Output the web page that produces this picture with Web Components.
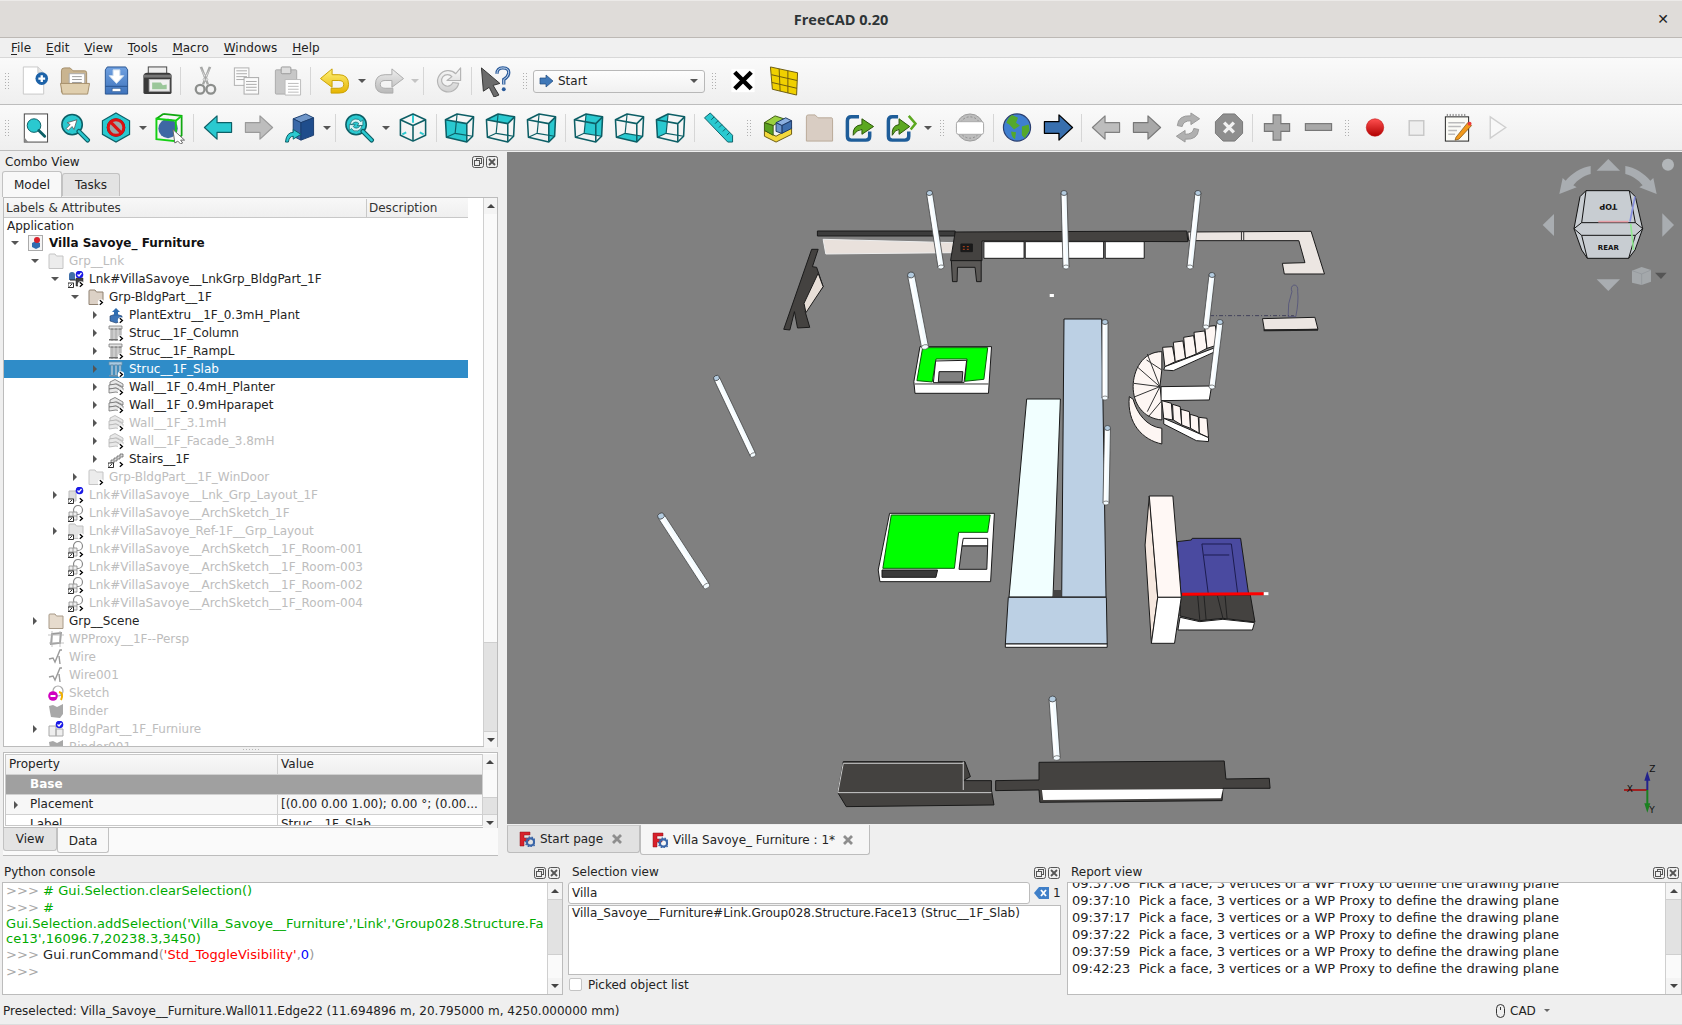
<!DOCTYPE html>
<html>
<head>
<meta charset="utf-8">
<title>FreeCAD 0.20</title>
<style>
  html, body { margin: 0; height: 100%; overflow: hidden; }
  body { background: #efefef; color: #232323; font: 12px "DejaVu Sans", sans-serif; width: 1682px; height: 1025px; display: flex; flex-direction: column; }
  #main { display: flex; height: 706px; }
  #center { width: 1175px; display: flex; flex-direction: column; }
  #bottom { display: flex; height: 138px; }
</style>
</head>
<body>
<fc-titlebar>FreeCAD 0.20</fc-titlebar>
<fc-menubar></fc-menubar>
<fc-toolbar h="46">
  <fc-grip w="13"></fc-grip>
  <fc-tool icon="new"></fc-tool><fc-tool icon="open"></fc-tool><fc-tool icon="save"></fc-tool><fc-tool icon="print"></fc-tool>
  <fc-sep w="7"></fc-sep>
  <fc-tool icon="cut"></fc-tool><fc-tool icon="copy"></fc-tool><fc-tool icon="paste"></fc-tool>
  <fc-sep w="7"></fc-sep>
  <fc-tool icon="undo"></fc-tool><fc-drop w="13"></fc-drop><fc-tool icon="redo"></fc-tool><fc-drop w="11" off></fc-drop>
  <fc-sep w="7"></fc-sep>
  <fc-tool icon="refresh"></fc-tool>
  <fc-sep w="7"></fc-sep>
  <fc-tool icon="whats"></fc-tool>
  <fc-grip w="17"></fc-grip>
  <fc-workbench>Start</fc-workbench>
  <fc-grip w="17"></fc-grip>
  <fc-tool icon="cross"></fc-tool><fc-tool icon="wallgrid"></fc-tool>
</fc-toolbar>
<fc-toolbar h="45">
  <fc-grip w="13"></fc-grip>
  <fc-tool icon="fitall"></fc-tool><fc-tool icon="fitsel"></fc-tool><fc-tool icon="nostyle"></fc-tool><fc-drop w="13"></fc-drop><fc-tool icon="bbox"></fc-tool>
  <fc-sep w="7"></fc-sep>
  <fc-tool icon="back"></fc-tool><fc-tool icon="fwd"></fc-tool><fc-tool icon="boxview"></fc-tool><fc-drop w="13"></fc-drop>
  <fc-sep w="5"></fc-sep>
  <fc-tool icon="sync"></fc-tool><fc-drop w="13"></fc-drop><fc-tool icon="iso"></fc-tool>
  <fc-sep w="6"></fc-sep>
  <fc-tool icon="vfront"></fc-tool><fc-tool icon="vtop"></fc-tool><fc-tool icon="vright"></fc-tool>
  <fc-sep w="6"></fc-sep>
  <fc-tool icon="vrear"></fc-tool><fc-tool icon="vbottom"></fc-tool><fc-tool icon="vleft"></fc-tool>
  <fc-sep w="7"></fc-sep>
  <fc-tool icon="ruler"></fc-tool>
  <fc-grip w="18"></fc-grip>
  <fc-tool icon="part"></fc-tool><fc-tool icon="folder"></fc-tool><fc-tool icon="linkto"></fc-tool><fc-tool icon="linkact"></fc-tool><fc-drop w="13"></fc-drop>
  <fc-grip w="15"></fc-grip>
  <fc-tool icon="coin"></fc-tool>
  <fc-sep w="6"></fc-sep>
  <fc-tool icon="globe"></fc-tool><fc-tool icon="bluefwd"></fc-tool>
  <fc-sep w="7"></fc-sep>
  <fc-tool icon="gback"></fc-tool><fc-tool icon="gfwd"></fc-tool><fc-tool icon="greload"></fc-tool><fc-tool icon="gstop"></fc-tool>
  <fc-sep w="7"></fc-sep>
  <fc-tool icon="gplus"></fc-tool><fc-tool icon="gminus"></fc-tool>
  <fc-grip w="16"></fc-grip>
  <fc-tool icon="rec"></fc-tool><fc-tool icon="stop"></fc-tool><fc-tool icon="notes"></fc-tool><fc-tool icon="play"></fc-tool>
</fc-toolbar>
<div id="main">
  <fc-combo></fc-combo>
  <div id="center">
    <fc-viewer></fc-viewer>
    <fc-doctabs></fc-doctabs>
  </div>
</div>
<div id="bottom">
  <fc-dock title="Python console" w="563" pad="0"><fc-console></fc-console></fc-dock>
  <fc-dock title="Selection view" w="500" pad="5"><fc-selection></fc-selection></fc-dock>
  <fc-dock title="Report view" w="619" pad="4"><fc-report></fc-report></fc-dock>
</div>
<fc-statusbar></fc-statusbar>

<script>
const dk = '#0d5f66', tl = '#2ac9d0';
const grad = (id, a, b) => `<defs><linearGradient id="${id}" x1="0" y1="0" x2="0" y2="1"><stop offset="0" stop-color="${a}"/><stop offset="1" stop-color="${b}"/></linearGradient></defs>`;

// oblique wire box, one face filled per standard view
function cube(face) {
  const f = {
    front: '1,8 23,12 23,31 2,26', right: '23,12 30,5 29,25 23,31', top: '1,8 13,2 30,5 23,12',
    rear: '13,2 30,5 29,25 11,22', bottom: '2,26 11,22 29,25 23,31', left: '1,8 13,2 11,22 2,26'
  }[face];
  return `${f ? `<polygon points="${f}" fill="${tl}"/>` : ''}
  <g fill="none" stroke="${dk}" stroke-width="1.600" stroke-linejoin="round"><polygon points="13,2 30,5 29,25 23,31 2,26 1,8"/><path d="M1 8L23 12L30 5M23 12V31"/><path d="M13 2L11 22M2 26L11 22L29 25" stroke-width="1.200"/></g>`;
}
const hex = `<g fill="none" stroke="${dk}" stroke-width="1.600" stroke-linejoin="round"><polygon points="16,2 29,8 29,24 16,30 3,24 3,8"/><path d="M3 8L16 14L29 8M16 14V30"/></g><path d="M16 3V11M9 21L5 23M23 21L27 23" stroke="${tl}" stroke-width="2"/>`;
const mag = inner => `<circle cx="13" cy="13" r="10.500" fill="${tl}" stroke="${dk}" stroke-width="1.600"/>${inner}<path d="M20 20L29 29" stroke="${dk}" stroke-width="5" stroke-linecap="round"/><path d="M20 20L29 29" stroke="${tl}" stroke-width="2.600" stroke-linecap="round"/>`;
const larrow = (fill, line) => `<polygon points="2,16 15,4 15,11 30,11 30,21 15,21 15,28" fill="${fill}" stroke="${line}" stroke-width="1.200" stroke-linejoin="round"/>`;
const rarrow = (fill, line) => `<polygon points="30,16 17,4 17,11 2,11 2,21 17,21 17,28" fill="${fill}" stroke="${line}" stroke-width="1.200" stroke-linejoin="round"/>`;
const reload = (fill, line) => `<path d="M24 9A11 11 0 1 0 27 19L21 18A6 6 0 1 1 20 12L15 16L29 16L29 3Z" fill="${fill}" stroke="${line}" stroke-width="1.200" stroke-linejoin="round"/>`;

const ICONS = {
  new: `<path d="M5 2H20L26 8V30H5Z" fill="#fff" stroke="#c8c8c8"/><path d="M20 2V8H26" fill="#e4e4e4" stroke="#c8c8c8"/><circle cx="24" cy="14" r="6.500" fill="#1c62a8"/><path d="M24 10.500V17.500M20.500 14H27.500" stroke="#fff" stroke-width="2.400"/>`,
  open: `<path d="M2 6Q2 3 5 3H11L14 6H26Q28 6 28 8V28H2Z" fill="#c9b490" stroke="#a48e6a"/><rect x="10" y="9" width="16" height="14" fill="#fff" stroke="#aaa"/><path d="M13 12H23M13 15H23M13 18H23" stroke="#999"/><path d="M1 19H31L29 30H3Z" fill="#e0cfae" stroke="#a48e6a"/>`,
  save: grad('sv', '#6fa0e0', '#3f74bc') + `<path d="M7 2H26L28 5V30H5V5Z" fill="url(#sv)" stroke="#27548f"/><path d="M5 22H28" stroke="#27548f"/><path d="M13 5H20V11H24L16.500 19L9 11H13Z" fill="#fff" stroke="#cde"/><rect x="12" y="24" width="9" height="3.500" fill="#fff" stroke="#27548f" stroke-width=".6"/>`,
  print: `<rect x="7" y="2" width="19" height="9" fill="#eee" stroke="#444"/><path d="M2 12Q2 8 6 8H27Q31 8 31 12V28Q31 30 29 30H4Q2 30 2 28Z" fill="#3a3a3a"/><rect x="2" y="10" width="29" height="3" fill="#777"/><rect x="8" y="15" width="21" height="12" fill="#f2f2f2" stroke="#bbb"/><path d="M11 18H20L22 21L26 20V25H11Z" fill="#9bc79a"/>`,
  cut: `<g fill="none" stroke="#a4a6a4" stroke-width="2.400"><path d="M12 2L19 20M21 2L14 20"/><circle cx="11" cy="25" r="4.500" stroke="#8c8e8c"/><circle cx="22" cy="25" r="4.500" stroke="#8c8e8c"/></g><path d="M11 2L17 17L19 15Z M22 2L16 17L14 15Z" fill="#e9e9e9" stroke="#aaa" stroke-width=".7"/>`,
  copy: `<rect x="4" y="3" width="15" height="18" fill="#fbfbfb" stroke="#b0b0b0"/><path d="M6 6H17M6 9H17M6 12H17M6 15H17" stroke="#aaa"/><rect x="14" y="13" width="15" height="17" fill="#fbfbfb" stroke="#a8a8a8"/><path d="M16 17H27M16 20H27M16 23H27M16 26H27" stroke="#aaa"/>`,
  paste: `<rect x="4" y="5" width="22" height="25" rx="1" fill="#c7c7c7" stroke="#aaa"/><rect x="10" y="2" width="10" height="7" rx="1" fill="#ddd" stroke="#999"/><path d="M14 15H30V31H14Z" fill="#fff" stroke="#bbb"/><path d="M17 19H28M17 22H28M17 25H28M17 28H28" stroke="#bbb"/>`,
  undo: grad('u', '#fff27a', '#e6b400') + `<path d="M1 14L13 4V10H20Q30 10 30 20Q30 29 20 29H12V24H20Q25 24 25 20Q25 16 20 16H13V23Z" fill="url(#u)" stroke="#c9a100" stroke-linejoin="round"/>`,
  redo: grad('r', '#efefef', '#b8b8b8') + `<path d="M31 14L19 4V10H12Q2 10 2 20Q2 29 12 29H20V24H12Q7 24 7 20Q7 16 12 16H19V23Z" fill="url(#r)" stroke="#aaa" stroke-linejoin="round"/>`,
  refresh: grad('rf', '#fafafa', '#d0d0d0') + reload('url(#rf)', '#b4b4b4'),
  whats: `<path d="M1 3L20 19L13 21L19 31L14 33L9 23L3 27Z" fill="#6b6b6b" stroke="#333"/><path d="M17 9Q17 3 23 3Q30 3 29 9Q28 13 24 15L24 20" fill="none" stroke="#2a5a9a" stroke-width="3.400"/><path d="M17 9Q17 3 23 3Q30 3 29 9Q28 13 24 15L24 20" fill="none" stroke="#cfe0f4" stroke-width="1"/><circle cx="24" cy="25" r="2" fill="#2a5a9a"/>`,
  cross: `<rect x="4" y="4" width="24" height="24" fill="#fff"/><path d="M7.500 7.500L24.500 24.500M24.500 7.500L7.500 24.500" stroke="#000" stroke-width="4.600"/>`,
  wallgrid: `<polygon points="2,2 30,8 29,31 4,25" fill="#f0d000" stroke="#6a5a10"/><path d="M3 10L29.500 16M3.500 18L29.300 24M11 4L12 27M20 6L20 29" stroke="#6a5a10" fill="none"/>`,
  fitall: `<rect x="6" y="2" width="24" height="29" fill="#fff" stroke="#444"/><path d="M6 31L6 26L10 31Z" fill="#888"/><circle cx="16" cy="14" r="7" fill="${tl}" stroke="${dk}"/><path d="M21 19L27 25" stroke="${dk}" stroke-width="3" stroke-linecap="round"/>`,
  fitsel: mag(`<path d="M18 8L8 11L11 13L7 17L9 19L13 15L15 18Z" fill="#fff" stroke="#555" stroke-width=".8"/>`),
  nostyle: `<polygon points="16,1 30,9 30,23 16,31 2,23 2,9" fill="${tl}" stroke="${dk}" stroke-width="1.200"/><circle cx="16" cy="16" r="9" fill="#9aa" stroke="#2a2a2a" stroke-width="1.200"/><circle cx="16" cy="16" r="8" fill="none" stroke="#d11" stroke-width="3"/><path d="M10.500 10.500L21.500 21.500" stroke="#d11" stroke-width="3.200"/>`,
  bbox: `<circle cx="14" cy="17" r="10" fill="#3e68a4"/><path d="M9 2L28 4V24L22 30M9 2L2 7" fill="none" stroke="#11a811" stroke-width="1.800"/><path d="M2 7L22 9V30L2 28ZM22 9L28 4" fill="none" stroke="#14d014" stroke-width="2"/><path d="M19 18L31 29L27 29L29 32L27 33L24 30L21 32Z" fill="#fff" stroke="#666"/>`,
  back: larrow(tl, dk),
  fwd: rarrow('#bdbdbd', '#9a9a9a'),
  boxview: `<polygon points="9,7 22,2 30,6 17,11" fill="#6e95c8" stroke="#1b3e70"/><polygon points="9,7 17,11 17,29 9,25" fill="#3a68a8" stroke="#1b3e70"/><polygon points="17,11 30,6 30,24 17,29" fill="#1f4d8c" stroke="#1b3e70"/><path d="M1 31Q2 21 9 21V18L17 23L9 28V25Q5 25 4 31Z" fill="${tl}" stroke="${dk}"/>`,
  sync: mag(`<path d="M7 12A6 6 0 0 1 18 10L20 8V14H14L16 12A4 4 0 0 0 9 13Z M19 14A6 6 0 0 1 8 17L6 19V13H12L10 15A4 4 0 0 0 17 14Z" fill="#d8f6f7" stroke="${dk}" stroke-width=".7"/>`),
  iso: hex,
  vfront: cube('front'), vtop: cube('top'), vright: cube('right'), vrear: cube('rear'), vbottom: cube('bottom'), vleft: cube('left'),
  ruler: `<polygon points="1,6 7,1 30,24 30,31 25,31" fill="${tl}" stroke="${dk}"/><path d="M8 8L11 5M12 12L15 9M16 16L19 13M20 20L23 17M24 24L27 21" stroke="${dk}"/>`,
  part: `<polygon points="2,19 14,25 30,16 30,23 14,31 2,25" fill="#f4d83c" stroke="#6a5a10"/><polygon points="2,11 13,4 22,7 11,14" fill="#9ad040" stroke="#3c5a10"/><polygon points="2,11 11,14 11,24 2,19" fill="#5aa020" stroke="#3c5a10"/><polygon points="14,11 24,6 30,9 20,14" fill="#8cb0e0" stroke="#1f3a66"/><polygon points="20,14 30,9 30,17 20,22" fill="#3f6fae" stroke="#1f3a66"/><polygon points="14,11 20,14 20,22 14,20" fill="#6a94cc" stroke="#1f3a66"/>`,
  folder: `<path d="M3 5Q3 3 5 3H12L15 6H29Q30 6 30 8V30H3Z" fill="#d9cdc3" stroke="#b9a998"/>`,
  linkto: `<path d="M15 5H7Q3 5 3 9V25Q3 29 7 29H22Q26 29 26 25V20" fill="none" stroke="#1e5d99" stroke-width="3.600"/><path d="M9 24Q8 14 18 13V7L30 15L18 23V18Q13 18 9 24Z" fill="#5ca820" stroke="#2a5508"/>`,
  linkact: `<path d="M13 5H7Q3 5 3 9V25Q3 29 7 29H20Q24 29 24 25V20" fill="none" stroke="#1e5d99" stroke-width="3.600"/><path d="M7 24Q6 14 14 13V7L25 15L14 23V18Q10 18 7 24Z" fill="#5ca820" stroke="#2a5508"/><path d="M24 4L31 12L26 18" fill="none" stroke="#5ca820" stroke-width="2.600"/>`,
  coin: `<circle cx="16" cy="16" r="14" fill="#bdbdbd" stroke="#9a9a9a"/><circle cx="16" cy="16" r="11" fill="none" stroke="#8a8a8a" stroke-dasharray="2 2"/><rect x="2" y="10" width="28" height="13" rx="2" fill="#fff" stroke="#aaa"/>`,
  globe: `<circle cx="16" cy="16" r="14" fill="#3f7fd0" stroke="#2a3f70" stroke-width="1.200"/><path d="M11 3L17 6L15 11L19 14L13 18L8 13L5 11Q7 5 11 3ZM21 15L28 13L29 19L24 27L21 24ZM10 20L15 21L14 28Q10 26 10 20Z" fill="#54a82c"/>`,
  bluefwd: `<polygon points="31,16 17,3 17,10 2,10 2,22 17,22 17,29" fill="#386fae" stroke="#000" stroke-width="1.300" stroke-linejoin="round"/>`,
  gback: larrow('#bdbdbd', '#808080'),
  gfwd: rarrow('#a8a8a8', '#777'),
  greload: `<path d="M5 14Q6 3 19 4V1L28 7L19 13V9Q11 9 10 15Z M27 18Q26 29 13 28V31L4 25L13 19V23Q21 23 22 17Z" fill="#b0b0b0" stroke="#999"/>`,
  gstop: `<polygon points="10,2 22,2 30,10 30,22 22,30 10,30 2,22 2,10" fill="#8e8e8e" stroke="#777"/><path d="M11 11L21 21M21 11L11 21" stroke="#f2f2f2" stroke-width="3.400"/>`,
  gplus: `<polygon points="12,3 20,3 20,12 29,12 29,20 20,20 20,29 12,29 12,20 3,20 3,12 12,12" fill="#a8a8a8" stroke="#777" stroke-width="1.200"/>`,
  gminus: `<rect x="3" y="12" width="27" height="7" fill="#a8a8a8" stroke="#777" stroke-width="1.200"/>`,
  rec: grad('rc', '#ff5050', '#b00000') + `<circle cx="16" cy="16" r="9" fill="url(#rc)" stroke="#c01010" stroke-width=".6"/>`,
  stop: `<rect x="9" y="9" width="15" height="15" fill="#eee" stroke="#c8c8c8" stroke-width="1.500"/>`,
  notes: `<rect x="4" y="5" width="24" height="25" fill="#fbfbf6" stroke="#222"/><path d="M6 5V2M9 5V2M12 5V2M15 5V2M18 5V2M21 5V2M24 5V2" stroke="#777"/><path d="M7 11H24M7 15H20M7 19H16M7 23H14" stroke="#bbb" stroke-width="1.500"/><path d="M15 26L27 11L31 14L18 28L14 29Z" fill="#f29a1c" stroke="#7a4a08" stroke-width=".7"/><circle cx="29" cy="12" r="2" fill="#ec3a3a"/>`,
  play: `<polygon points="8,5 24,16 8,27" fill="#f8f8f8" stroke="#cfcfcf" stroke-width="1.400"/>`
};

const chev = `<circle cx="13" cy="13.500" r="3.200" fill="#fff"/><path d="M11.800 11.300L14.400 13.500L11.800 15.700" fill="none" stroke="#000" stroke-width="1.300"/>`;
const lnk = `<rect x="0" y="12" width="5.500" height="4.500" fill="#fff" stroke="#000" stroke-width=".8"/><path d="M1.500 15.500L4 13" stroke="#000" stroke-width=".8"/>`;
const check = `<circle cx="11.500" cy="3.500" r="3.800" fill="#1a1ae6"/><path d="M9.500 3.500L11 5L13.500 2" fill="none" stroke="#fff" stroke-width="1.300"/>`;
const fold = (a, b) => `<path d="M1 2Q1 1 2 1H7L8.500 3H15V15.500H1Z" fill="${a}" stroke="${b}"/>`;
const struct = (c, s) => `<path d="M1 1H14V4H1Z M3 4H5V15H3Z M7 4H9V15H7Z M11 4H13V15H11Z" fill="${c}" stroke="${s}" stroke-width=".7"/><rect x="1" y="14" width="13" height="1.500" fill="${s}"/>`;
const wall = c => `<g fill="#e8e8e8" stroke="${c}" stroke-width=".8"><polygon points="2,3 7,0.500 15,5 15,8 9,5 2,6"/><polygon points="1,6 8,5 15,9 15,12 8,9 1,10"/><polygon points="1,10 8,9 15,13 15,15 8,13 1,14"/></g>`;
const arch = c => `<circle cx="10" cy="5" r="4.500" fill="none" stroke="${c}" stroke-width="1.200"/><path d="M1 7H9V15H1Z M5 7V15M1 11H9" fill="#eee" stroke="${c}" stroke-width=".8"/>`;
const TREE_ICONS = {
  doc: `<rect x=".5" y=".5" width="14" height="15" fill="#f4f4f4" stroke="#aaa"/><polygon points="4,8 8,6 12,8 12,12 8,14 4,12" fill="#2f6cb0"/><circle cx="9" cy="5" r="3" fill="#d8202a"/>`,
  gfold: fold('#ececec', '#c4c4c4'),
  lnkchk: `<path d="M1 4A3 3 0 0 1 7 4V9H1Z" fill="#3f6fa8"/><path d="M8 7H15V15H8Z" fill="#444" stroke="#222" stroke-width=".5"/><path d="M2 9H8" stroke="#222"/>` + check + lnk + chev,
  foldlnk: fold('#dcd1c6', '#8f8171') + chev,
  extr: `<polygon points="2,9 8,7 14,9 14,14 8,16 2,14" fill="#3e74b6" stroke="#1e3a66" stroke-width=".6"/><path d="M8 1L12 5H10V9H6V5H4Z" fill="#2f6cb0"/>` + chev,
  struct: struct('#e4e4e4', '#6f6f6f') + chev,
  structsel: struct('#a9cbe4', '#6f8fa8') + chev,
  wall: wall('#6f6f6f') + chev,
  wallg: wall('#b4b4b4') + chev,
  stairs: `<path d="M6 7H9V5H12V3H15V6H12V8H9V10H6V12H3V9H6Z" fill="#ddd" stroke="#555" stroke-width=".7"/>` + lnk + chev,
  gfoldlnk: fold('#ececec', '#c4c4c4') + chev,
  lchk: `<path d="M1 4H8V14H1Z" fill="#ddd" stroke="#bbb"/>` + check + lnk + chev,
  larch: arch('#8a8a8a') + lnk + chev,
  lfold: fold('#e4e4e4', '#c0c0c0') + lnk + chev,
  scene: fold('#e6dbcd', '#a89a88'),
  proxy: `<path d="M4 3L13 2L12 12L3 13Z" fill="none" stroke="#9a9a9a" stroke-width="1.800"/><path d="M0 4H16M1 12H16M4 0V16M12 0V16" stroke="#b4b4b4" stroke-width=".8"/>`,
  wire: `<path d="M1 10L5 9L7 13L12 1L14 1M11 7L12 15" fill="none" stroke="#9a9a9a" stroke-width="1.400"/>`,
  sketch: `<circle cx="10" cy="6" r="5" fill="none" stroke="#aaa" stroke-width="1.200"/><circle cx="5" cy="11" r="4.800" fill="#d000c0"/><rect x="2.500" y="10" width="5" height="2" fill="#fff"/><path d="M11 7Q16 8 13 15" fill="none" stroke="#f0b000" stroke-width="2"/>`,
  binder: `<path d="M1 3L5 2L9 4L15 1V11L12 15L3 14L2 9Z" fill="#a8a8a8"/>`,
  part: `<path d="M1 5H8V15H1Z M8 8H15V15H8Z" fill="#eee" stroke="#a8a8a8"/>` + check
};

const svg16 = k => `<svg width="16" height="17" viewBox="0 0 16 17">${TREE_ICONS[k] || ''}</svg>`;

// small base for the elements that only stamp html in a shadow root
class Box extends HTMLElement {
  connectedCallback() {
    if (this.shadowRoot) return;
    this.attachShadow({ mode: 'open' }).innerHTML = this.render();
  }
}
const def = (name, html) => customElements.define(name, class extends Box { render() { return html.call(this, this); } });

def('fc-titlebar', () => `<style>
  :host { display: flex; height: 36px; flex: none; align-items: center; justify-content: center; background: #dfdcd9; border-top: 1px solid #eceae8; border-bottom: 1px solid #bdb9b5; position: relative; font: bold 14.500px "Open Sans", sans-serif; color: #2e3436; }
  b { position: absolute; right: 13px; top: 10px; font: bold 14px "DejaVu Sans", sans-serif; color: #222; }
</style><slot></slot><b>✕</b>`);

def('fc-menubar', () => {
  const items = [['F', 'ile'], ['E', 'dit'], ['V', 'iew'], ['T', 'ools'], ['M', 'acro'], ['W', 'indows'], ['H', 'elp']];
  return `<style>
    :host { display: flex; flex: none; height: 19px; padding-left: 11px; gap: 15px; align-items: center; background: #f0f0f0; border-bottom: 1px solid #d8d8d8; color: #222; }
    u { text-decoration-thickness: 1px; text-underline-offset: 2px; }
  </style>` + items.map(i => `<span><u>${i[0]}</u>${i[1]}</span>`).join('');
});

def('fc-toolbar', el => `<style>
  :host { display: flex; flex: none; height: ${el.getAttribute('h')}px; align-items: center; background: linear-gradient(#fafafa, #efefef); border-bottom: 1px solid #bdbdbd; }
</style><slot></slot>`);

def('fc-tool', el => `<style>
  :host { display: flex; flex: none; width: 41px; height: 36px; align-items: center; justify-content: center; }
</style><svg width="32" height="32" viewBox="0 0 32 33">${ICONS[el.getAttribute('icon')] || ''}</svg>`);

def('fc-drop', el => `<style>
  :host { display: flex; flex: none; width: ${el.getAttribute('w')}px; align-items: center; justify-content: center; }
  i { width: 0; height: 0; border: 4px solid transparent; border-top: 4px solid ${el.hasAttribute('off') ? '#c4c4c4' : '#555'}; border-bottom: 0; }
</style><i></i>`);

def('fc-sep', el => `<style>
  :host { display: flex; flex: none; width: ${el.getAttribute('w')}px; height: 28px; justify-content: center; }
  i { width: 1px; background: #d6d6d6; }
</style><i></i>`);

def('fc-grip', el => `<style>
  :host { display: flex; flex: none; width: ${el.getAttribute('w')}px; height: 18px; justify-content: center; }
  i { width: 5px; background: radial-gradient(circle, #b0b0b0 .7px, transparent .8px) 0 0 / 3px 3px; }
</style><i></i>`);

def('fc-workbench', () => `<style>
  :host { display: flex; flex: none; width: 172px; height: 23px; box-sizing: border-box; align-items: center; background: linear-gradient(#fdfdfd, #f1f1f1); border: 1px solid #b8b8b8; border-radius: 3px; padding-left: 5px; gap: 4px; }
  span { flex: 1; } i { width: 0; height: 0; border: 4px solid transparent; border-top: 4px solid #555; border-bottom: 0; margin-right: 6px; }
</style><svg width="15" height="14" viewBox="0 0 15 14"><polygon points="14,7 7,1 7,4 1,4 1,10 7,10 7,13" fill="#3f78b8" stroke="#1f4a80" stroke-width=".7"/></svg><span><slot></slot></span><i></i>`);

def('fc-scroll', el => {
  const before = el.getAttribute('before') || 0, thumb = el.getAttribute('thumb') || 0, w = el.getAttribute('w') || 15;
  return `<style>
    :host { display: flex; flex: none; flex-direction: column; width: ${w}px; box-sizing: border-box; border-left: 1px solid #cfcfcf; background: #fafafa; }
    .a { height: 16px; flex: none; display: flex; align-items: center; justify-content: center; background: #f4f4f4; }
    .up { width: 0; height: 0; border: 4px solid transparent; border-bottom: 4px solid #444; border-top: 0; }
    .dn { width: 0; height: 0; border: 4px solid transparent; border-top: 4px solid #444; border-bottom: 0; }
    .sp { flex: none; height: ${before}px; } .t { flex: none; height: ${thumb}px; background: #e2e2e2; border-top: 1px solid #cfcfcf; border-bottom: 1px solid #cfcfcf; box-sizing: border-box; } .f { flex: 1; }
  </style><div class="a"><i class="up"></i></div><div class="sp"></div><div class="t"></div><div class="f"></div><div class="a"><i class="dn"></i></div>`;
});

def('fc-dockbtns', () => `<style>:host { display: flex; gap: 2px; }</style>
  <svg width="12" height="12" viewBox="0 0 12 12" fill="none" stroke="#555"><rect x=".5" y=".5" width="11" height="11" rx="2"/><rect x="4.500" y="2.500" width="5" height="5"/><rect x="2.500" y="4.500" width="5" height="5" fill="#eee"/></svg>
  <svg width="12" height="12" viewBox="0 0 12 12" fill="none" stroke="#555"><rect x=".5" y=".5" width="11" height="11" rx="2"/><path d="M3 3L9 9M9 3L3 9" stroke-width="1.800"/></svg>`);

def('fc-tab', el => {
  const on = el.hasAttribute('on');
  const top = el.getAttribute('top') !== null;
  return `<style>
    :host { display: flex; flex: none; box-sizing: border-box; width: ${el.getAttribute('w')}px; align-items: center; justify-content: center; color: #232323; border: 1px solid #c2c2c2;
      background: ${on ? '#f8f8f8' : '#e3e3e3'}; border-radius: ${top ? '3px 3px 0 0' : '0 0 3px 3px'}; ${top ? 'border-bottom: 0;' : 'border-top: 0;'} height: ${on ? 26 : 23}px; ${top && !on ? 'margin-top: 2px;' : ''} ${!top && on ? 'height: 25px; padding-top: 1px;' : ''} }
  </style><slot></slot>`;
});

// [depth, arrow (d down / r right / ''), icon, label, dimmed]
const TREE = [
  [-1, '', '', 'Application'],
  [0, 'd', 'doc', 'Villa Savoye_ Furniture', 0, 1],
  [1, 'd', 'gfold', 'Grp__Lnk', 1],
  [2, 'd', 'lnkchk', 'Lnk#VillaSavoye__LnkGrp_BldgPart_1F'],
  [3, 'd', 'foldlnk', 'Grp-BldgPart__1F'],
  [4, 'r', 'extr', 'PlantExtru__1F_0.3mH_Plant'],
  [4, 'r', 'struct', 'Struc__1F_Column'],
  [4, 'r', 'struct', 'Struc__1F_RampL'],
  [4, 'r', 'structsel', 'Struc__1F_Slab', 0, 0, 1],
  [4, 'r', 'wall', 'Wall__1F_0.4mH_Planter'],
  [4, 'r', 'wall', 'Wall__1F_0.9mHparapet'],
  [4, 'r', 'wallg', 'Wall__1F_3.1mH', 1],
  [4, 'r', 'wallg', 'Wall__1F_Facade_3.8mH', 1],
  [4, 'r', 'stairs', 'Stairs__1F'],
  [3, 'r', 'gfoldlnk', 'Grp-BldgPart__1F_WinDoor', 1],
  [2, 'r', 'lchk', 'Lnk#VillaSavoye__Lnk_Grp_Layout_1F', 1],
  [2, '', 'larch', 'Lnk#VillaSavoye__ArchSketch_1F', 1],
  [2, 'r', 'lfold', 'Lnk#VillaSavoye_Ref-1F__Grp_Layout', 1],
  [2, '', 'larch', 'Lnk#VillaSavoye__ArchSketch__1F_Room-001', 1],
  [2, '', 'larch', 'Lnk#VillaSavoye__ArchSketch__1F_Room-003', 1],
  [2, '', 'larch', 'Lnk#VillaSavoye__ArchSketch__1F_Room-002', 1],
  [2, '', 'larch', 'Lnk#VillaSavoye__ArchSketch__1F_Room-004', 1],
  [1, 'r', 'scene', 'Grp__Scene'],
  [1, '', 'proxy', 'WPProxy__1F--Persp', 1],
  [1, '', 'wire', 'Wire', 1],
  [1, '', 'wire', 'Wire001', 1],
  [1, '', 'sketch', 'Sketch', 1],
  [1, '', 'binder', 'Binder', 1],
  [1, 'r', 'part', 'BldgPart__1F_Furniure', 1],
  [1, '', 'binder', 'Binder001', 1]
];

def('fc-tree', () => `<style>
  :host { display: flex; height: 550px; box-sizing: border-box; border: 1px solid #bcbcbc; background: #fff; flex: none; }
  .l { flex: 1; overflow: hidden; }
  .h { display: flex; height: 20px; width: 464px; background: linear-gradient(#f8f8f8, #efefef); border-bottom: 1px solid #c8c8c8; box-sizing: border-box; align-items: center; color: #333; padding-top: 1px; }
  .h span:first-child { width: 363px; padding-left: 2px; box-sizing: border-box; border-right: 1px solid #c8c8c8; height: 100%; line-height: 19px; }
  .h span + span { padding-left: 2px; }
  .r { display: flex; height: 18px; width: 464px; align-items: center; white-space: nowrap; box-sizing: border-box; }
  .r.app { height: 16px; padding-left: 3px; }
  .r.sel { background: #2f8cc8; color: #fff; }
  .r.dim span { color: #bdbdbd; }
  .r b { font-weight: bold; color: #111; }
  .r svg { margin: 0 5px 0 3px; flex: none; }
  .ar { width: 20px; flex: none; display: flex; justify-content: center; }
  .d { width: 0; height: 0; border: 4px solid transparent; border-top: 4px solid #555; border-bottom: 0; }
  .s { width: 0; height: 0; border: 4px solid transparent; border-left: 4px solid #555; border-right: 0; }
</style><div class="l"><div class="h"><span>Labels &amp; Attributes</span><span>Description</span></div>` +
  TREE.map(([dp, ar, ic, tx, dim, bold, sel]) => dp < 0
    ? `<div class="r app">${tx}</div>`
    : `<div class="r${dim ? ' dim' : ''}${sel ? ' sel' : ''}" style="padding-left:${1 + 20 * dp}px"><div class="ar">${ar ? `<i class="${ar === 'd' ? 'd' : 's'}"></i>` : ''}</div>${svg16(ic)}<span>${bold ? `<b>${tx}</b>` : tx}</span></div>`).join('') +
  `</div><fc-scroll w="14" before="428" thumb="90"></fc-scroll>`);

def('fc-props', () => `<style>
  :host { display: flex; height: 76px; flex: none; box-sizing: border-box; border: 1px solid #bcbcbc; padding: 1px 0 1px 1px; background: #fff; }
  .l { flex: 1; overflow: hidden; border: 1px solid #c8c8c8; border-right: 0; }
  .rw { display: grid; grid-template-columns: 271px 1fr; height: 20px; line-height: 19px; box-sizing: border-box; border-bottom: 1px solid #d0d0d0; white-space: nowrap; }
  .rw > div { padding-left: 3px; overflow: hidden; }
  .rw > div + div { border-left: 1px solid #d0d0d0; padding-left: 3px; }
  .hd { background: linear-gradient(#f8f8f8, #efefef); }
  .base { background: #a0a0a0; color: #fff; font-weight: bold; }
  .base > div { padding-left: 24px; } .base > div + div { border: 0; }
  .alt { background: #f7f7f7; }
  .ind { padding-left: 24px !important; position: relative; }
  .s { position: absolute; left: 8px; top: 6px; width: 0; height: 0; border: 4px solid transparent; border-left: 4px solid #555; border-right: 0; }
</style><div class="l">
  <div class="rw hd"><div>Property</div><div>Value</div></div>
  <div class="rw base"><div>Base</div><div></div></div>
  <div class="rw alt"><div class="ind"><i class="s"></i>Placement</div><div>[(0.00 0.00 1.00); 0.00 °; (0.00...</div></div>
  <div class="rw"><div style="padding-left:24px">Label</div><div>Struc__1F_Slab</div></div>
</div><fc-scroll w="15" before="27" thumb="18"></fc-scroll>`);

def('fc-combo', () => `<style>
  :host { display: flex; flex-direction: column; flex: none; width: 507px; box-sizing: border-box; padding: 0 9px 0 3px; }
  .t { display: flex; height: 20px; flex: none; box-sizing: border-box; align-items: center; justify-content: space-between; padding: 1px 0 0 2px; }
  .tabs { display: flex; height: 26px; flex: none; align-items: flex-start; margin-left: -1px; }
  .grip { height: 5px; flex: none; display: flex; justify-content: center; }
  .grip i { width: 18px; height: 3px; margin-top: 1px; background: radial-gradient(circle, #b8b8b8 .6px, transparent .7px) 0 0 / 3px 3px; }
  .btm { display: flex; height: 27px; flex: none; background: #fafafa; border-bottom: 1px solid #bcbcbc; margin-right: 0; }
</style>
<div class="t"><span>Combo View</span><fc-dockbtns></fc-dockbtns></div>
<div class="tabs"><fc-tab top on w="60">Model</fc-tab><fc-tab top w="58">Tasks</fc-tab></div>
<fc-tree></fc-tree>
<div class="grip"><i></i></div>
<fc-props></fc-props>
<div class="btm"><fc-tab w="54">View</fc-tab><fc-tab on w="52">Data</fc-tab></div>`);

// --- 3D view: the model is drawn on page coordinates, grouped per zoom scale
function pillar(x1, y1, x2, y2, w) {
  const dx = x2 - x1, dy = y2 - y1, l = Math.hypot(dx, dy), nx = -dy / l * w / 2, ny = dx / l * w / 2;
  const p = [[x1 + nx, y1 + ny], [x2 + nx, y2 + ny], [x2 - nx, y2 - ny], [x1 - nx, y1 - ny]].map(a => a.join(',')).join(' ');
  const ang = Math.atan2(dy, dx) * 180 / Math.PI + 90;
  return `<polygon points="${p}" fill="#f3fbff" stroke="#444" stroke-width=".8"/><line x1="${x1 + nx / 3}" y1="${y1 + ny / 3}" x2="${x2 + nx / 3}" y2="${y2 + ny / 3}" stroke="#fff" stroke-width="2"/>
  <ellipse cx="${x2}" cy="${y2}" rx="${w / 2}" ry="${w / 3}" transform="rotate(${ang} ${x2} ${y2})" fill="#f3fbff" stroke="#444" stroke-width=".6"/>
  <ellipse cx="${x1}" cy="${y1}" rx="${w / 2}" ry="${w / 2.4}" transform="rotate(${ang} ${x1} ${y1})" fill="#b3cbdf" stroke="#333" stroke-width=".7"/>`;
}
const PILLARS = [[929.5, 193, 941, 267, 6], [1064, 193, 1066, 267, 6], [1198, 193, 1190, 267, 6], [911, 275, 925, 347, 7], [1212, 275, 1206, 327, 6],
  [1220, 322, 1212, 387, 6], [1105, 322, 1105, 398, 6], [1107.500, 428, 1106, 503, 6], [661, 516, 706.500, 586, 7], [716.500, 378, 753, 455, 6], [1052.500, 699, 1056.700, 758, 7]];

const P = (pts, fill, extra = '') => `<polygon points="${pts}" fill="${fill}" ${extra}/>`;

// the two long slabs, in page coordinates
const slabs = `<g stroke="#1a1a1a" stroke-width="1">
  ${P('1064,319 1101.700,319 1106,597 1061.700,597', '#bcd0e4')}
  ${P('1026.700,399 1060.400,399 1053,597 1009,597', '#f1ffff')}
  <path d="M1054 590H1061.700V597H1053Z" fill="#444" stroke="none"/>
</g>`;

// north part, coordinates of the crop at (760,170)
const north = `<g class="model" stroke="#1a1a1a" stroke-width="1" transform="translate(760 170) scale(.3827 .3333)">
  ${P('150,183 510,183 510,198 150,198', '#3c3c3c')}
  ${P('165,208 505,218 505,248 172,252', '#e9e1dc', 'stroke="#eee"')}
  ${P('510,186 1115,183 1118,215 580,213 580,272 498,272', '#444240')}
  ${P('525,222 555,222 555,245 525,245', '#1a1a1a')}
  <path d="M530 230H550M530 238H550" stroke="#b8461e" stroke-dasharray="2 2"/>
  ${P('500,272 578,272 578,335 566,335 562,292 516,292 515,335 503,335', '#5a5856')}
  ${P('585,215 690,215 690,265 585,265', '#fff')}${P('693,215 898,215 898,265 693,265', '#fff')}${P('902,215 1004,215 1004,265 902,265', '#fff')}
  ${P('1118,186 1440,184 1475,312 1370,312 1365,280 1424,278 1408,212 1120,212', '#ece6e2')}
  <path d="M1258 185V213M1264 185V213" stroke="#333"/>
  ${P('135,238 152,238 137,290 148,292 165,350 118,425 130,472 98,474 90,425 78,480 62,478', '#444240')}
  ${P('152,310 165,350 120,428 115,400', '#e8dfd8')}
  ${P('418,530 605,530 597,670 405,670 402,635', '#fff')}
  ${P('425,533 595,533 585,628 535,634 541,567 460,567 450,636 410,632', '#0f0', 'stroke="#0a5a0a"')}
  ${P('459,573 540,571 533,638 453,638', '#fff')}${P('468,605 530,605 528,636 466,636', '#808080')}
  <path d="M405 642L597 642" stroke="#333"/>
  <g fill="#fdf6f3">
    <path d="M1050 545C1000 545 975 600 975 650C975 700 1000 745 1050 750L1050 692L1045 650L1050 600Z"/>
    <path d="M965 680C958 760 1000 810 1050 822L1050 775C1010 770 985 730 975 688Z"/>
    ${P('1048,650 1180,648 1174,690 1048,692', '#fff')}
    ${P('1052,532 1078,530 1085,575 1058,590', '#fdf6f3')}${P('1080,517 1105,513 1112,565 1085,575', '#fdf6f3')}${P('1107,502 1133,497 1140,552 1112,565', '#fdf6f3')}${P('1134,487 1162,483 1168,535 1140,552', '#fdf6f3')}${P('1162,470 1190,467 1196,525 1168,535', '#fdf6f3')}
    ${P('1058,590 1196,530 1195,542 1080,602 1055,600', '#fff')}
    ${P('1050,692 1075,700 1078,750 1055,745', '#fdf6f3')}${P('1078,703 1098,710 1102,765 1080,750', '#fdf6f3')}${P('1100,718 1122,725 1125,775 1102,765', '#fdf6f3')}${P('1124,733 1145,740 1148,790 1125,775', '#fdf6f3')}${P('1147,742 1168,745 1172,803 1148,790', '#fdf6f3')}
    ${P('1055,745 1172,803 1172,815 1140,812 1055,762', '#fff')}
  </g>
  <path d="M1045 650L1012 552M1045 650L985 590M1045 650L976 640M1045 650L980 680M1045 650L1012 725M1050 600L1010 570M1050 692L1015 740" stroke="#333" fill="none"/>
  ${P('1313,446 1450,442 1458,478 1318,481', '#ece6e2')}
  <path d="M1316 481L1458 479" stroke="#222" stroke-width="2"/>
  <path d="M1395 345Q1407 345 1405 365Q1408 395 1400 440H1380Q1378 400 1390 365Q1385 350 1395 345Z" fill="none" stroke="#50507a" stroke-width=".8"/>
  <path d="M1176 437H1395" stroke="#40405a" stroke-dasharray="4 2 1 2" stroke-width="1"/>
  ${P('757,372 768,372 768,381 757,381', '#fff', 'stroke="none"')}
</g>`;

// south part, coordinates of the crop at (640,490)
const south = `<g class="model" stroke="#1a1a1a" stroke-width="1" transform="translate(640 490) scale(.4209 .3333)">
  ${P('875,322 1108,322 1110,462 868,462', '#bcd0e4')}
  ${P('868,462 1110,462 1110,472 868,472', '#fff')}
  ${P('593,70 842,70 833,275 570,275 566,240', '#fff')}
  ${P('597,75 832,75 826,127 757,127 747,235 577,235', '#0f0', 'stroke="#0a5a0a"')}
  ${P('768,145 826,145 826,168 765,168', '#fff')}${P('765,168 826,168 824,238 758,238', '#808080')}
  ${P('575,240 707,240 703,262 575,262', '#3a3a3a')}
  ${P('1276,155 1310,150 1312,145 1427,145 1446,312 1285,312', '#4a4aa0')}
  <path d="M1335 162H1405L1420 310M1335 162L1350 310M1340 195H1400" fill="none" stroke="#1c1c50"/>
  ${P('1285,315 1450,315 1461,396 1385,385 1330,392 1283,378', '#444240')}
  <path d="M1325 318L1330 390M1372 318L1385 385M1340 318L1345 390M1390 318L1395 388" stroke="#222"/>
  ${P('1283,382 1330,395 1385,388 1460,398 1455,420 1278,420', '#fff')}
  ${P('1210,18 1230,322 1215,460 1200,165', '#f6e8df')}
  ${P('1210,18 1266,18 1286,322 1230,322', '#fff8f5')}
  ${P('1230,322 1286,322 1270,460 1215,460', '#fff')}
  <path d="M1288 313L1482 311" stroke="#f00" stroke-width="3"/><path d="M1482 311H1493" stroke="#fff" stroke-width="3"/>
  ${P('483,815 772,815 785,860 768,872 835,872 835,900 841,945 490,950 470,908', '#444240')}
  <path d="M483 820L470 908H835M768 815V900M483 820H768" fill="none" stroke="#ccc"/>
  ${P('845,872 948,870 948,817 1388,813 1392,867 1495,865 1497,895 1385,895 1383,932 950,937 948,900 845,902', '#444240')}
  ${P('955,900 1385,897 1380,925 958,930', '#fff', 'stroke="none"')}
</g>`;

// nav cube, coordinates of the crop at (1500,150)
const navcube = `<g transform="translate(1500 150) scale(.3333)" fill="#a9adb1">
  <polygon points="290,62 325,27 360,62"/><polygon points="290,388 360,388 325,423"/><polygon points="162,192 162,258 128,225"/><polygon points="487,190 522,225 487,260"/>
  <path d="M272 48L272 72C250 78 232 90 220 106L230 112L178 132L188 84L197 92C215 70 245 52 272 48Z"/>
  <path d="M376 48L376 72C398 78 416 90 428 106L418 112L470 132L460 84L451 92C433 70 403 52 376 48Z"/>
  <circle cx="504" cy="44" r="18" fill="#b2b6b9"/>
  <polygon points="396,362 425,351 453,360 453,395 425,405 396,398" fill="#a4a8ab"/><path d="M396 362L425 372L453 360M425 372V405" stroke="#909498" stroke-width="2" fill="none"/>
  <polygon points="465,368 500,368 483,387" fill="#555"/>
  <polygon points="258,122 388,122 406,140 428,236 405,300 386,325 262,325 245,300 222,236 240,140" fill="#c8cdd2"/>
  <g fill="none" stroke="#111" stroke-width="3">
    <path d="M258 122H388L406 140L428 236L405 300L386 325H262L245 300L222 236L240 140Z"/>
    <path d="M258 122L245 218H406L388 122M222 236L245 218M406 218L428 236L406 256H245L222 236M245 256L262 325M406 256L386 325"/>
  </g>
  <path d="M295 215H385" stroke="#e8a0a8" stroke-width="5"/><path d="M405 140L390 215" stroke="#8890e0" stroke-width="5"/><path d="M392 222L401 300" stroke="#90e890" stroke-width="5"/>
  <text x="0" y="0" transform="translate(325 170) rotate(180)" text-anchor="middle" font-family="DejaVu Sans" font-weight="bold" font-size="24" fill="#111" dominant-baseline="middle" stroke="none">TOP</text>
  <text x="325" y="300" text-anchor="middle" font-family="DejaVu Sans" font-weight="bold" font-size="21" fill="#111" stroke="none">REAR</text>
</g>`;

const axes = `<g transform="translate(1600 750) scale(.3333)" stroke-width="6">
  <path d="M72 120H142" stroke="#a02020"/><path d="M142 120V85" stroke="#22228c"/><path d="M142 120V165" stroke="#1a8020"/>
  <polygon points="142,64 133,92 151,92" fill="#22228c"/><polygon points="142,188 133,160 151,160" fill="#1a8020"/>
  <g font-family="DejaVu Sans" font-size="27" fill="#111" stroke="none"><text x="80" y="125">X</text><text x="148" y="65">Z</text><text x="148" y="188">Y</text></g>
</g>`;

def('fc-viewer', () => `<style>
  :host { display: block; height: 672px; flex: none; margin-top: 1px; background: #808080; overflow: hidden; }
  svg { display: block; }
  .model * { vector-effect: non-scaling-stroke; }
</style><svg width="1175" height="672" viewBox="507 152 1175 672">${slabs}${south}${north}${PILLARS.map(a => pillar(...a)).join('')}${navcube}${axes}</svg>`);

const FC = `<path d="M1 1H11V4H5V7H10V10H5V15H1Z" fill="#d8202a" stroke="#8a1018" stroke-width=".5"/><circle cx="11.500" cy="11" r="3.600" fill="none" stroke="#3a66a8" stroke-width="2.200"/><circle cx="11.500" cy="11" r="5" fill="none" stroke="#3a66a8" stroke-width="1.400" stroke-dasharray="1.500 1.500"/>`;
const XX = `<svg width="12" height="12" viewBox="0 0 12 12"><path d="M2 2L10 10M10 2L2 10" stroke="#8e8e8e" stroke-width="2.800"/></svg>`;

def('fc-doctabs', () => `<style>
  :host { display: flex; flex: none; height: 33px; padding-top: 1px; box-sizing: border-box; }
  .tab { display: flex; box-sizing: border-box; align-items: center; gap: 5px; border: 1px solid #bdbdbd; border-top-color: #ccc; border-radius: 0 0 3px 3px; flex: none; }
  .a { width: 133px; height: 28px; background: #e1e1e1; padding-left: 11px; margin-top: 0; }
  .b { width: 230px; height: 30px; background: #f6f6f6; padding-left: 11px; border-top: 0; }
  .a svg:last-child { margin-left: 3px; } .b svg:last-child { margin-left: 2px; }
</style>
<div class="tab a"><svg width="16" height="16" viewBox="0 0 16 16">${FC}</svg><span>Start page</span>${XX}</div>
<div class="tab b"><svg width="16" height="16" viewBox="0 0 16 16">${FC}</svg><span>Villa Savoye_ Furniture : 1*</span>${XX}</div>`);

def('fc-dock', el => `<style>
  :host { display: flex; flex-direction: column; flex: none; width: ${el.getAttribute('w')}px; box-sizing: border-box; padding-left: ${el.getAttribute('pad')}px; }
  .t { display: flex; height: 25px; flex: none; align-items: flex-end; justify-content: space-between; padding: 0 3px 3px 4px; box-sizing: border-box; }
  .b { flex: 1; display: flex; min-height: 0; }
</style><div class="t"><span>${el.getAttribute('title')}</span><fc-dockbtns></fc-dockbtns></div><div class="b"><slot></slot></div>`);

const g = s => `<span style="color:#00aa00">${s}</span>`;
const pr = `<span style="color:#a8a8a8">&gt;&gt;&gt;</span> `;
def('fc-console', () => `<style>
  :host { display: flex; flex: 1; margin-left: 2px; border: 1px solid #bcbcbc; background: #fff; }
  .c { flex: 1; overflow: hidden; padding: 0 3px; white-space: nowrap; font-size: 13px; letter-spacing: .06px; margin-top: -1px; }
  .l { height: 17px; line-height: 17px; } .w { height: 15px; line-height: 15px; } .p { color: #999; }
</style><div class="c">
  <div class="l">${pr}${g('# Gui.Selection.clearSelection()')}</div>
  <div class="l">${pr}${g('#')}</div>
  <div class="w">${g("Gui.Selection.addSelection('Villa_Savoye__Furniture','Link','Group028.Structure.Fa")}</div>
  <div class="w">${g("ce13',16096.7,20238.3,3450)")}</div>
  <div class="l">${pr}Gui<span class="p">.</span>runCommand<span class="p">(</span><span style="color:#f00">'Std_ToggleVisibility'</span><span class="p">,</span><span style="color:#00f">0</span><span class="p">)</span></div>
  <div class="l">${pr}</div>
</div><fc-scroll w="15" before="0" thumb="56"></fc-scroll>`);

def('fc-selection', () => `<style>
  :host { display: flex; flex-direction: column; flex: 1; }
  .top { display: flex; height: 22px; align-items: center; flex: none; }
  .in { width: 462px; height: 22px; box-sizing: border-box; border: 1px solid #bcbcbc; border-radius: 3px; background: #fff; padding-left: 3px; line-height: 20px; flex: none; }
  .clr { display: flex; align-items: center; gap: 3px; margin-left: 4px; }
  .lst { height: 70px; box-sizing: border-box; margin-top: 1px; width: 493px; border: 1px solid #bcbcbc; background: #fff; padding: 0 3px; line-height: 15px; white-space: nowrap; flex: none; }
  .pk { display: flex; gap: 6px; align-items: center; margin-top: 0; height: 19px; padding-left: 1px; }
  .pk i { width: 13px; height: 13px; box-sizing: border-box; border: 1px solid #c4c4c4; background: #fff; border-radius: 2px; }
</style>
<div class="top"><div class="in">Villa</div><div class="clr"><svg width="16" height="16" viewBox="0 0 16 16"><path d="M5 2H15V14H5L0 8Z" fill="#3f7fc8"/><path d="M7 5L12 11M12 5L7 11" stroke="#fff" stroke-width="1.800"/></svg><span>1</span></div></div>
<div class="lst">Villa_Savoye__Furniture#Link.Group028.Structure.Face13 (Struc__1F_Slab)</div>
<div class="pk"><i></i><span>Picked object list</span></div>`);

def('fc-report', () => {
  const rows = ['09:37:10', '09:37:17', '09:37:22', '09:37:59', '09:42:23'];
  const msg = 'Pick a face, 3 vertices or a WP Proxy to define the drawing plane';
  return `<style>
    :host { display: flex; flex: 1; border: 1px solid #bcbcbc; background: #fff; margin-right: 0; }
    .c { flex: 1; overflow: hidden; padding-left: 4px; font-size: 13px; white-space: pre; }
    .c div { height: 17px; line-height: 17px; }
    .c div:first-child { margin-top: -8px; }
  </style><div class="c"><div>09:37:08  ${msg}</div>${rows.map(r => `<div>${r}  ${msg}</div>`).join('')}</div><fc-scroll w="16" before="0" thumb="56"></fc-scroll>`;
});

def('fc-statusbar', () => `<style>
  :host { display: flex; flex: 1; align-items: center; padding: 2px 0 0 3px; border-bottom: 1px solid #ddd; white-space: nowrap; }
  span { flex: 1; }
  .nav { display: flex; align-items: center; gap: 5px; width: 186px; }
  i { width: 0; height: 0; border: 3px solid transparent; border-top: 3px solid #666; border-bottom: 0; margin-left: 3px; }
</style><span>Preselected: Villa_Savoye__Furniture.Wall011.Edge22 (11.694896 m, 20.795000 m, 4250.000000 mm)</span>
<div class="nav"><svg width="9" height="14" viewBox="0 0 9 14" fill="none" stroke="#333"><rect x=".5" y=".5" width="8" height="13" rx="4"/><path d="M4.500 3V6"/></svg><b style="font-weight:normal">CAD</b><i></i></div>`);
</script>
</body>
</html>
